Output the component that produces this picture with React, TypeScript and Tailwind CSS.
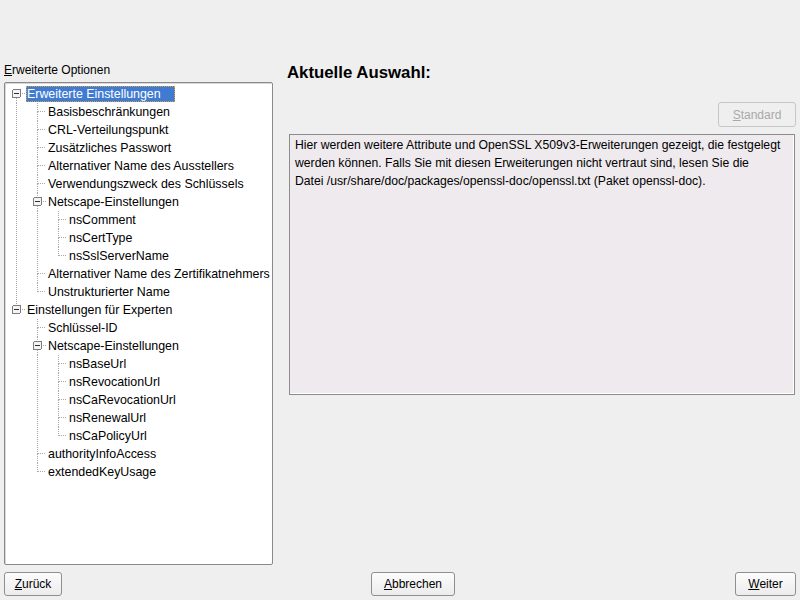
import type { ReactNode } from "react";

type Node = {
  label: string;
  selected?: boolean;
  children?: Node[];
};

const tree: Node[] = [
  {
    label: "Erweiterte Einstellungen",
    selected: true,
    children: [
      { label: "Basisbeschränkungen" },
      { label: "CRL-Verteilungspunkt" },
      { label: "Zusätzliches Passwort" },
      { label: "Alternativer Name des Ausstellers" },
      { label: "Verwendungszweck des Schlüssels" },
      {
        label: "Netscape-Einstellungen",
        children: [{ label: "nsComment" }, { label: "nsCertType" }, { label: "nsSslServerName" }],
      },
      { label: "Alternativer Name des Zertifikatnehmers" },
      { label: "Unstrukturierter Name" },
    ],
  },
  {
    label: "Einstellungen für Experten",
    children: [
      { label: "Schlüssel-ID" },
      {
        label: "Netscape-Einstellungen",
        children: [
          { label: "nsBaseUrl" },
          { label: "nsRevocationUrl" },
          { label: "nsCaRevocationUrl" },
          { label: "nsRenewalUrl" },
          { label: "nsCaPolicyUrl" },
        ],
      },
      { label: "authorityInfoAccess" },
      { label: "extendedKeyUsage" },
    ],
  },
];

type Row = {
  label: string;
  selected?: boolean;
  guides: boolean[];
  first: boolean;
  hasNext: boolean;
  hasChildren: boolean;
};

function flatten(nodes: Node[], guides: boolean[] = [], out: Row[] = []): Row[] {
  nodes.forEach((n, i) => {
    const hasNext = i < nodes.length - 1;
    out.push({
      label: n.label,
      selected: n.selected,
      guides,
      first: guides.length === 0 && i === 0,
      hasNext,
      hasChildren: !!n.children,
    });
    if (n.children) flatten(n.children, [...guides, hasNext], out);
  });
  return out;
}

const DOT = "#a8a8a8";

function Guide({ line }: { line: boolean }) {
  return (
    <svg width="21" height="18" className="shrink-0" shapeRendering="crispEdges">
      {line && <line x1="10.5" y1="0" x2="10.5" y2="18" stroke={DOT} strokeDasharray="1 1" />}
    </svg>
  );
}

function Connector({ row }: { row: Row }) {
  return (
    <svg width="21" height="18" className="shrink-0" shapeRendering="crispEdges">
      {!row.first && <line x1="10.5" y1="0" x2="10.5" y2="9" stroke={DOT} strokeDasharray="1 1" />}
      {row.hasNext && <line x1="10.5" y1="9" x2="10.5" y2="18" stroke={DOT} strokeDasharray="1 1" />}
      <line x1={row.hasChildren ? 16 : 11} y1="8.5" x2="19" y2="8.5" stroke={DOT} strokeDasharray="1 1" />
      {row.hasChildren && (
        <>
          <rect x="6.5" y="4.5" width="8" height="8" rx="1.5" fill="#f4f4f4" stroke="#7c7c7c" />
          <line x1="8" y1="8.5" x2="13" y2="8.5" stroke="#303030" />
        </>
      )}
    </svg>
  );
}

function Btn({ children, className }: { children: ReactNode; className?: string }) {
  return (
    <button
      className={
        "h-[24px] rounded-[3px] border border-[#8f8f8f] bg-gradient-to-b from-[#fcfcfc] to-[#ececec] text-[12px] leading-none text-black " +
        (className ?? "")
      }
    >
      {children}
    </button>
  );
}

export default function App() {
  const rows = flatten(tree);
  return (
    <div
      className="w-[800px] h-[600px] bg-[#efefef] flex flex-col overflow-hidden text-black"
      style={{ fontFamily: '"Liberation Sans", Arial, sans-serif' }}
    >
      <div className="flex pt-[63px]">
        <div className="ml-[4px] w-[269px] shrink-0 flex flex-col">
          <div className="text-[12px] leading-[14px] h-[14px]">
            <span className="underline">E</span>rweiterte Optionen
          </div>
          <div className="mt-[5px] h-[483px] rounded-[2px] border border-[#8a8a8a] bg-white pt-[2px] pl-[1px] shadow-[inset_1px_1px_0_#d8d8d8]">
            {rows.map((r, i) => (
              <div key={i} className="flex h-[18px] items-center">
                {r.guides.map((g, k) => (
                  <Guide key={k} line={g} />
                ))}
                <Connector row={r} />
                <span
                  className={
                    "ml-[-1px] pl-[1px] h-[16px] leading-[16px] text-[12.4px] whitespace-nowrap " +
                    (r.selected
                      ? "pr-[14px] bg-[#3f7bd2] text-white outline-1 outline-dotted outline-[#e0a030] -outline-offset-1"
                      : "pr-[3px]")
                  }
                >
                  {r.label}
                </span>
              </div>
            ))}
          </div>
        </div>

        <div className="ml-[14px] flex-1 min-w-0 mr-[4px] flex flex-col">
          <div className="text-[16.8px] font-bold leading-[20px] h-[20px]">Aktuelle Auswahl:</div>
          <div className="mt-[19px] flex justify-end">
            <button className="h-[25px] w-[78px] rounded-[3px] border border-[#c6c6c6] bg-[#efefef] text-[12px] leading-none text-[#a9a9a9]">
              <span className="underline">S</span>tandard
            </button>
          </div>
          <div className="mt-[7px] ml-[2px] mr-[1px] h-[261px] overflow-hidden border border-[#8c8c8c] bg-[#eeeaed] px-[5px] pt-[1px] text-[12.2px] leading-[18px] whitespace-nowrap shadow-[inset_-1px_-1px_0_#ffffff]">
            Hier werden weitere Attribute und OpenSSL X509v3-Erweiterungen gezeigt, die festgelegt
            <br />
            werden können. Falls Sie mit diesen Erweiterungen nicht vertraut sind, lesen Sie die
            <br />
            Datei /usr/share/doc/packages/openssl-doc/openssl.txt (Paket openssl-doc).
          </div>
        </div>
      </div>

      <div className="flex mt-[7px] px-[4px]">
        <Btn className="w-[58px]">
          <span className="underline">Z</span>urück
        </Btn>
        <Btn className="w-[84px] ml-[309px]">
          <span className="underline">A</span>bbrechen
        </Btn>
        <Btn className="w-[61px] ml-auto">
          <span className="underline">W</span>eiter
        </Btn>
      </div>
    </div>
  );
}
